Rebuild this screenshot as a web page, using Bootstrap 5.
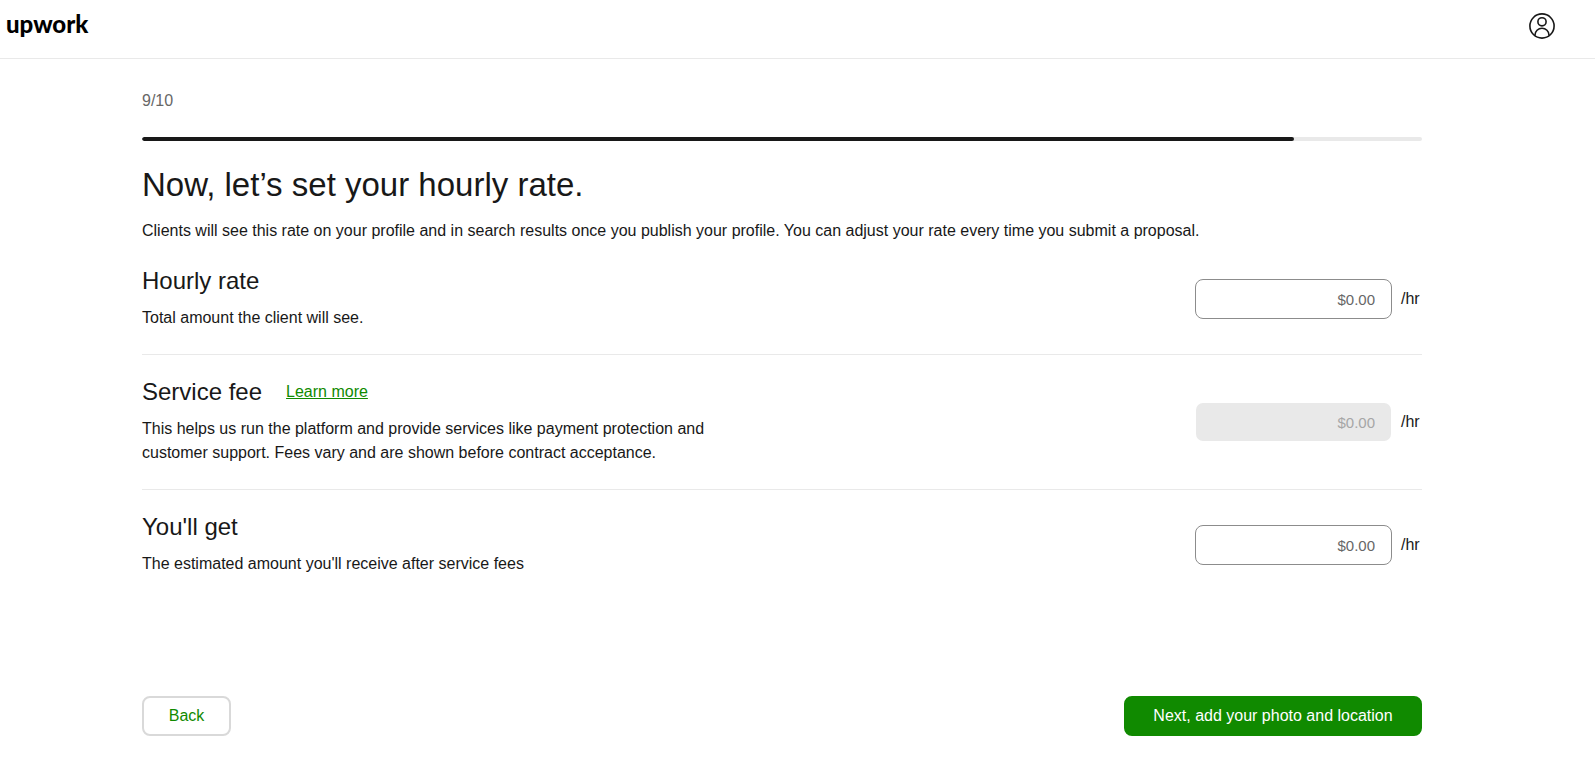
<!DOCTYPE html>
<html lang="en">
<head>
<meta charset="utf-8">
<meta name="viewport" content="width=device-width, initial-scale=1">
<title>Set your hourly rate</title>
<link href="https://cdn.jsdelivr.net/npm/bootstrap@5.3.0/dist/css/bootstrap.min.css" rel="stylesheet">
<style>
  :root { --ink: #181818; --line: #e9e9e9; --brand: #108a00; --muted: #676767; }
  body { font-family: "Liberation Sans", Arial, sans-serif; font-size: 16px; line-height: 24px; color: var(--ink); }
  .site-header { height: 59px; padding: 0 40px 6px 6px; border-bottom: 1px solid var(--line); }
  .brand-word { font-family: Lato, sans-serif; font-weight: 900; font-size: 24px; line-height: 28px; padding-bottom: 4px; color: #000; }
  .page-wrap { padding: 30px 31px 24px 0; }
  .step-content { max-width: 1280px; }
  .step-count { color: var(--muted); margin-bottom: 24px; }
  .progress { height: 4px; border-radius: 2px; background: var(--line); margin-bottom: 24px; }
  .progress-bar { background: var(--ink); border-radius: 2px; }
  h1 { font-size: 33px; line-height: 40px; font-weight: 400; margin-bottom: 14px; }
  h2 { font-size: 24px; line-height: 26px; font-weight: 400; margin: 0; }
  .rate-list { padding-top: 1px; }
  .rate-row { padding: 24px 0; border-bottom: 1px solid var(--line); }
  .rate-row:last-child { border-bottom: 0; }
  .rate-copy { max-width: 600px; }
  .rate-title { gap: 24px; margin-bottom: 12px; }
  .rate-title a { color: var(--brand); }
  .rate-field { gap: 9px; }
  .rate-unit { width: 21px; }
  .rate-input { width: 197px; height: 40px; border: 1px solid #8c8c8c; border-radius: 8px; padding: 0 16px; font-size: 15px; text-align: right; }
  .rate-input::placeholder { color: var(--muted); opacity: 1; }
  .rate-input:disabled { background: var(--line); background-clip: padding-box; border-color: transparent; }
  .rate-input:disabled::placeholder { color: #a6a6a6; }
  .step-actions { margin-top: 96px; }
  .step-actions .btn { height: 40px; min-width: 89px; padding: 0 24px; border: 2px solid #d9d9d9; border-radius: 8px; color: var(--brand); }
  .step-actions .btn-next { min-width: 298px; background: var(--brand); border-color: var(--brand); color: #fff; }
</style>
</head>
<body>
<header class="site-header d-flex align-items-center justify-content-between">
  <a href="#" class="brand-word text-decoration-none">upwork</a>
  <button type="button" class="btn p-0 border-0 d-flex" aria-label="Account">
    <svg width="26" height="26" viewBox="0 0 26 26" fill="none" stroke="#181818" stroke-width="1.6" aria-hidden="true">
      <circle cx="13" cy="13" r="12.1"/>
      <circle cx="13" cy="8.8" r="4.1"/>
      <path d="M6 22.7v-.6a7 6.8 0 0 1 14 0v.6"/>
    </svg>
  </button>
</header>
<main class="page-wrap">
  <div class="step-content mx-auto">
    <div class="step-count">9/10</div>
    <div class="progress" role="progressbar" aria-label="Profile steps" aria-valuenow="90" aria-valuemin="0" aria-valuemax="100">
      <div class="progress-bar" style="width: 90%"></div>
    </div>
    <h1>Now, let’s set your hourly rate.</h1>
    <p class="mb-0">Clients will see this rate on your profile and in search results once you publish your profile. You can adjust your rate every time you submit a proposal.</p>
    <div class="rate-list">
      <section class="rate-row d-flex align-items-center justify-content-between">
        <div class="rate-copy">
          <div class="rate-title d-flex align-items-center"><h2><label for="hourly">Hourly rate</label></h2></div>
          <p class="mb-0">Total amount the client will see.</p>
        </div>
        <div class="rate-field d-flex align-items-center">
          <input class="form-control rate-input" id="hourly" type="text" placeholder="$0.00"><span class="rate-unit">/hr</span>
        </div>
      </section>
      <section class="rate-row d-flex align-items-center justify-content-between">
        <div class="rate-copy">
          <div class="rate-title d-flex align-items-center"><h2><label for="fee">Service fee</label></h2><a href="#">Learn more</a></div>
          <p class="mb-0">This helps us run the platform and provide services like payment protection and customer support. Fees vary and are shown before contract acceptance.</p>
        </div>
        <div class="rate-field d-flex align-items-center">
          <input class="form-control rate-input" id="fee" type="text" placeholder="$0.00" disabled><span class="rate-unit">/hr</span>
        </div>
      </section>
      <section class="rate-row d-flex align-items-center justify-content-between">
        <div class="rate-copy">
          <div class="rate-title d-flex align-items-center"><h2><label for="net">You'll get</label></h2></div>
          <p class="mb-0">The estimated amount you'll receive after service fees</p>
        </div>
        <div class="rate-field d-flex align-items-center">
          <input class="form-control rate-input" id="net" type="text" placeholder="$0.00"><span class="rate-unit">/hr</span>
        </div>
      </section>
    </div>
    <div class="step-actions d-flex justify-content-between">
      <button type="button" class="btn">Back</button>
      <button type="button" class="btn btn-next">Next, add your photo and location</button>
    </div>
  </div>
</main>
<script src="https://cdn.jsdelivr.net/npm/bootstrap@5.3.0/dist/js/bootstrap.bundle.min.js"></script>
</body>
</html>
